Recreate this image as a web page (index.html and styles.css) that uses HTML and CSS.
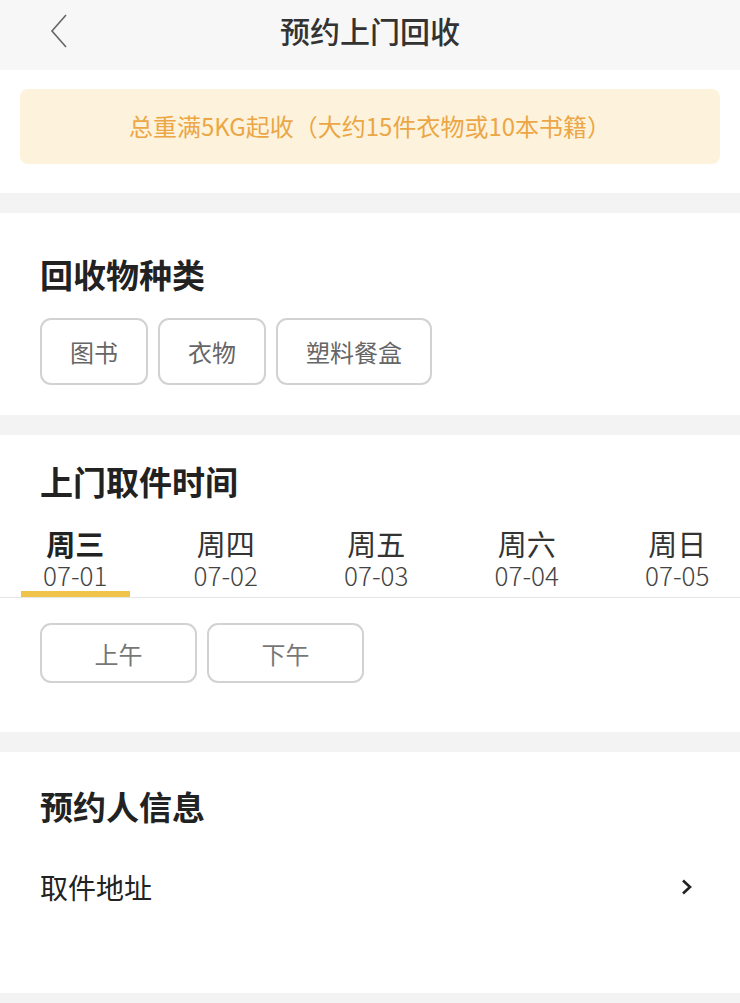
FILE: index.html
```html
<!DOCTYPE html>
<html lang="zh-CN">
<head>
    <meta charset="UTF-8">
    <meta name="viewport" content="width=device-width, initial-scale=1.0">
    <title>预约上门回收</title>
    <link rel="stylesheet" href="styles.css">
</head>
<body>
    <div class="header">
        <span class="back">
            <svg width="18" height="34" viewBox="0 0 18 34"><polyline points="16,1 2,17 16,33" fill="none" stroke="#666" stroke-width="1.6"/></svg>
        </span>
        <h1>预约上门回收</h1>
    </div>

    <div class="section notice-wrap">
        <div class="notice">总重满5KG起收（大约15件衣物或10本书籍）</div>
    </div>

    <div class="section">
        <h2>回收物种类</h2>
        <div class="chips">
            <span class="chip">图书</span>
            <span class="chip">衣物</span>
            <span class="chip">塑料餐盒</span>
        </div>
    </div>

    <div class="section time-section">
        <h2>上门取件时间</h2>
        <div class="tabs">
            <div class="tab active"><span class="day">周三</span><span class="date">07-01</span></div>
            <div class="tab"><span class="day">周四</span><span class="date">07-02</span></div>
            <div class="tab"><span class="day">周五</span><span class="date">07-03</span></div>
            <div class="tab"><span class="day">周六</span><span class="date">07-04</span></div>
            <div class="tab"><span class="day">周日</span><span class="date">07-05</span></div>
        </div>
        <div class="chips periods">
            <span class="chip period">上午</span>
            <span class="chip period">下午</span>
        </div>
    </div>

    <div class="section person">
        <h2>预约人信息</h2>
        <div class="row">
            <span>取件地址</span>
            <svg width="12" height="16" viewBox="0 0 12 16"><polyline points="2,1.5 9,8 2,14.5" fill="none" stroke="#222" stroke-width="2.6"/></svg>
        </div>
    </div>
</body>
</html>
```

FILE: styles.css
```css
body {
    margin: 0;
    background: #f3f3f3;
    font-family: "Noto Sans CJK SC", "Noto Sans", sans-serif;
    color: #222;
    width: 740px;
    overflow: hidden;
}
.header {
    height: 70px;
    background: #f7f7f7;
    display: flex;
    justify-content: center;
    position: relative;
}
.header h1 {
    margin: 0;
    font-size: 30px;
    line-height: 60px;
    font-weight: 500;
    color: #333;
}
.back {
    position: absolute;
    left: 50px;
    top: 14px;
}
.section {
    background: white;
    margin-bottom: 20px;
}
.notice-wrap {
    padding: 19px 20px 29px;
}
.notice {
    background: #fdf3dc;
    border-radius: 8px;
    height: 75px;
    display: flex;
    align-items: center;
    justify-content: center;
    color: #eca645;
    font-size: 24px;
    padding-bottom: 2px;
    box-sizing: border-box;
}
h2 {
    margin: 0;
    padding: 39px 40px 0;
    font-size: 33px;
    font-weight: 700;
    line-height: 44px;
    color: #222;
}
.chips {
    display: flex;
    gap: 10px;
    padding: 22px 40px 30px;
}
.chip {
    border: 2px solid #d2d2d2;
    border-radius: 11px;
    height: 67px;
    box-sizing: border-box;
    padding: 0 28px;
    display: flex;
    align-items: center;
    color: #666;
    font-size: 24px;
}
.time-section h2 {
    padding-top: 24px;
}
.tabs {
    display: flex;
    border-bottom: 1px solid #e6e6e6;
    margin-top: 23px;
}
.tab {
    flex: 0 0 150.5px;
    display: flex;
    flex-direction: column;
    align-items: center;
    position: relative;
    padding-bottom: 7px;
}
.day {
    font-size: 29px;
    line-height: 34px;
    color: #333;
}
.date {
    font-size: 26px;
    line-height: 30px;
    font-weight: 300;
    color: #444;
}
.tab.active .day {
    font-weight: 700;
    color: #222;
}
.tab.active::after {
    content: "";
    position: absolute;
    left: 21px;
    right: 21px;
    bottom: 0;
    height: 6px;
    background: #f0c34a;
}
.periods {
    padding-top: 25px;
    padding-bottom: 49px;
}
.period {
    width: 157px;
    height: 60px;
    justify-content: center;
    padding: 0;
    color: #777;
}
.person h2 {
    padding-top: 32px;
}
.row {
    display: flex;
    justify-content: space-between;
    align-items: center;
    padding: 39px 47px 86px 40px;
    font-size: 28px;
    line-height: 40px;
    color: #222;
}
```
